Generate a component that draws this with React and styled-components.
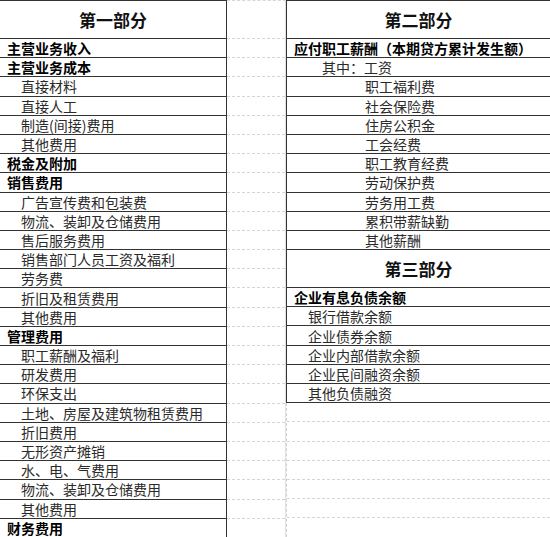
import styled, { createGlobalStyle } from "styled-components";

const GlobalStyle = createGlobalStyle`
  body {
    margin: 0;
    background: #fff;
    font-family: "Noto Sans CJK SC", "Liberation Serif", serif;
  }
`;

const ROW_H = 19.2;
const HEAD_H = 38;

const Sheet = styled.div`
  display: flex;
  align-items: flex-start;
  width: 550px;
  height: 537px;
  overflow: hidden;
`;

const LeftTable = styled.div`
  box-sizing: border-box;
  width: 227px;
  border-top: 1px solid #333;
  border-right: 1px solid #333;
`;

const HeadCell = styled.div`
  box-sizing: border-box;
  height: ${HEAD_H}px;
  display: flex;
  align-items: center;
  justify-content: center;
  font-size: 17px;
  font-weight: 700;
  color: #111;
  border-bottom: 1px solid #333;
`;

const Row = styled.div`
  box-sizing: border-box;
  height: ${ROW_H}px;
  display: flex;
  align-items: center;
  padding-left: ${(p) => p.$indent}px;
  font-size: 14px;
  line-height: 18px;
  white-space: nowrap;
  font-weight: ${(p) => (p.$bold ? 700 : 400)};
  color: ${(p) => (p.$bold ? "#000" : "#2a2a2a")};
  border-bottom: 1px solid #333;
`;

const GapColumn = styled.div`
  box-sizing: border-box;
  width: 59px;
  border-top: 1px dashed #d6d6d6;
  border-right: 1px solid #e2e2e2;
`;

const GridCell = styled.div`
  box-sizing: border-box;
  height: ${(p) => (p.$tall ? HEAD_H : ROW_H)}px;
  border-bottom: 1px dashed #d6d6d6;
`;

const RightColumn = styled.div`
  width: 264px;
  display: flex;
  flex-direction: column;
`;

const RightTable = styled.div`
  box-sizing: border-box;
  border-top: 1px solid #333;
  border-left: 1px solid #333;
`;

const BelowGrid = styled.div`
  box-sizing: border-box;
  border-left: 1px dashed #d0d0d0;
`;

const leftRows = [
  ["主营业务收入", true],
  ["主营业务成本", true],
  ["直接材料"],
  ["直接人工"],
  ["制造(间接)费用"],
  ["其他费用"],
  ["税金及附加", true],
  ["销售费用", true],
  ["广告宣传费和包装费"],
  ["物流、装卸及仓储费用"],
  ["售后服务费用"],
  ["销售部门人员工资及福利"],
  ["劳务费"],
  ["折旧及租赁费用"],
  ["其他费用"],
  ["管理费用", true],
  ["职工薪酬及福利"],
  ["研发费用"],
  ["环保支出"],
  ["土地、房屋及建筑物租赁费用"],
  ["折旧费用"],
  ["无形资产摊销"],
  ["水、电、气费用"],
  ["物流、装卸及仓储费用"],
  ["其他费用"],
  ["财务费用", true],
];

const salaryRows = [
  "职工福利费",
  "社会保险费",
  "住房公积金",
  "工会经费",
  "职工教育经费",
  "劳动保护费",
  "劳务用工费",
  "累积带薪缺勤",
  "其他薪酬",
];

const debtRows = [
  "银行借款余额",
  "企业债券余额",
  "企业内部借款余额",
  "企业民间融资余额",
  "其他负债融资",
];

const App = () => {
  return (
    <>
      <GlobalStyle />
      <Sheet>
        <LeftTable>
          <HeadCell>第一部分</HeadCell>
          {leftRows.map(([label, bold], i) => (
            <Row key={i} $bold={bold} $indent={bold ? 7 : 21}>
              {label}
            </Row>
          ))}
        </LeftTable>

        <GapColumn>
          <GridCell $tall />
          {leftRows.map((_, i) => (
            <GridCell key={i} />
          ))}
        </GapColumn>

        <RightColumn>
          <RightTable>
            <HeadCell>第二部分</HeadCell>
            <Row $bold $indent={7}>
              应付职工薪酬（本期贷方累计发生额）
            </Row>
            <Row $indent={35}>其中：工资</Row>
            {salaryRows.map((label) => (
              <Row key={label} $indent={78}>
                {label}
              </Row>
            ))}
            <HeadCell>第三部分</HeadCell>
            <Row $bold $indent={7}>
              企业有息负债余额
            </Row>
            {debtRows.map((label) => (
              <Row key={label} $indent={21}>
                {label}
              </Row>
            ))}
          </RightTable>
          <BelowGrid>
            {Array.from({ length: 8 }).map((_, i) => (
              <GridCell key={i} />
            ))}
          </BelowGrid>
        </RightColumn>
      </Sheet>
    </>
  );
};

export default App;
